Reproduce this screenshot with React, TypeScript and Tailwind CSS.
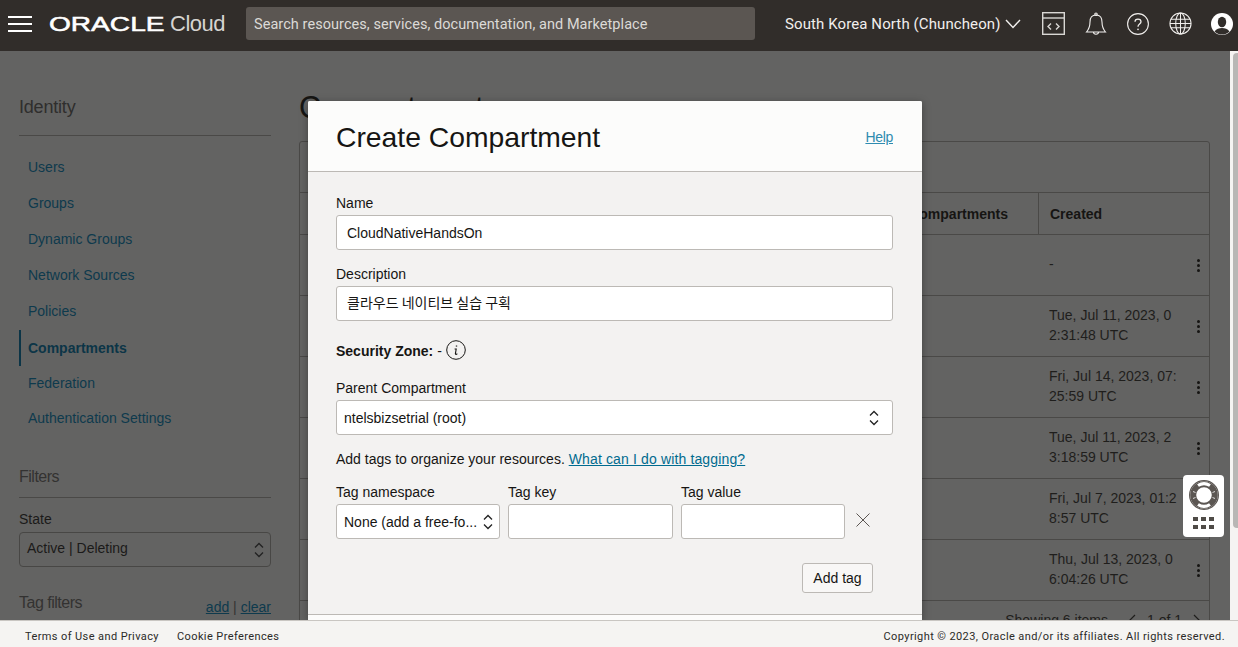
import React from 'react';

const sans = "font-['Liberation_Sans',Arial,sans-serif]";

const navItems = [
  { label: 'Users', cls: 'h-[36px] pl-[9px]' },
  { label: 'Groups', cls: 'h-[36px] pl-[9px]' },
  { label: 'Dynamic Groups', cls: 'h-[36px] pl-[9px]' },
  { label: 'Network Sources', cls: 'h-[36px] pl-[9px]' },
  { label: 'Policies', cls: 'h-[36px] pl-[9px]' },
  { label: 'Compartments', cls: 'h-[36px] mt-[1px] pl-[7px] border-l-2 border-[#0c3547] font-bold text-[#0c3547]' },
  { label: 'Federation', cls: 'h-[35px] pl-[9px]' },
  { label: 'Authentication Settings', cls: 'h-[35px] pl-[9px]' },
];

const rows = [
  ['-'],
  ['Tue, Jul 11, 2023, 0', '2:31:48 UTC'],
  ['Fri, Jul 14, 2023, 07:', '25:59 UTC'],
  ['Tue, Jul 11, 2023, 2', '3:18:59 UTC'],
  ['Fri, Jul 7, 2023, 01:2', '8:57 UTC'],
  ['Thu, Jul 13, 2023, 0', '6:04:26 UTC'],
];

const Updown = ({ color = '#222' }: { color?: string }) => (
  <svg width="10" height="16" viewBox="0 0 10 16" fill="none" stroke={color} strokeWidth="1.3">
    <path d="M1 5.5 L5 1.5 L9 5.5" />
    <path d="M1 10.5 L5 14.5 L9 10.5" />
  </svg>
);

const Dots = () => (
  <div className="flex flex-col gap-[2px]">
    <span className="w-[3px] h-[3px] rounded-full bg-[#161513]" />
    <span className="w-[3px] h-[3px] rounded-full bg-[#161513]" />
    <span className="w-[3px] h-[3px] rounded-full bg-[#161513]" />
  </div>
);

const Header = () => (
  <header className="h-[51px] shrink-0 bg-[#312d2a] flex items-center pb-[4px] text-white">
    <svg className="ml-[8px]" width="24" height="16" viewBox="0 0 24 16" stroke="#fff" strokeWidth="2">
      <path d="M0 1 H24 M0 8 H24 M0 15 H24" />
    </svg>
    <div className="ml-[17px] w-[180px] flex items-center">
      <span className="font-['Liberation_Sans',sans-serif] [-webkit-text-stroke:0.5px_white] text-[19.5px] leading-none w-[116px] mt-[2px] inline-block origin-left scale-x-[1.44]">ORACLE</span>
      <span className="font-['Liberation_Sans',sans-serif] font-light text-[#d6d4d1] text-[22px] leading-none ml-[5px] tracking-[-0.5px]">Cloud</span>
    </div>
    <div className="ml-[17px] w-[509px] h-[33px] bg-[#5b5652] rounded-[3px] flex items-center pl-[8px] pt-[2px] font-['Roboto',sans-serif] text-[14.5px] text-[#dcdad7] tracking-[0.06px]">
      Search resources, services, documentation, and Marketplace
    </div>
    <span className="ml-[30px] mt-[2px] font-['Roboto',sans-serif] text-[15px] text-[#f1efed] w-[217px] whitespace-nowrap tracking-[0.1px]">South Korea North (Chuncheon)</span>
    <svg className="ml-[3px]" width="16" height="10" viewBox="0 0 16 10" fill="none" stroke="#f1efed" strokeWidth="1.4">
      <path d="M1 1 L8 8.5 L15 1" />
    </svg>
    <svg className="ml-[21px]" width="23" height="23" viewBox="0 0 23 23" fill="none" stroke="#d9d7d4" strokeWidth="1.4">
      <rect x="0.7" y="0.7" width="21.6" height="21.6" />
      <path d="M1 6 H22" />
      <path d="M9 11.5 L6 14.5 L9 17.5 M14 11.5 L17 14.5 L14 17.5" />
    </svg>
    <svg className="ml-[20px]" width="22" height="24" viewBox="0 0 22 24" fill="none" stroke="#f1efed" strokeWidth="1.1">
      <path d="M11 3 C6.5 3 5 6.5 5 10 C5 14 4 17 1.5 20 H20.5 C18 17 17 14 17 10 C17 6.5 15.5 3 11 3 Z" />
      <circle cx="11" cy="2.2" r="1.2" />
      <path d="M8.5 20 C8.5 23 13.5 23 13.5 20" />
    </svg>
    <svg className="ml-[20px]" width="22" height="22" viewBox="0 0 22 22" fill="none" stroke="#f1efed" strokeWidth="1.1">
      <circle cx="11" cy="11" r="10.4" />
      <path d="M8 8.8 C8 5.2 14 5.2 14 8.8 C14 11.2 11 11 11 13.8" strokeWidth="1.3" />
      <circle cx="11" cy="16.4" r="0.8" fill="#f1efed" stroke="none" />
    </svg>
    <svg className="ml-[20px]" width="23" height="23" viewBox="0 0 24 24" fill="none" stroke="#f1efed" strokeWidth="1.1">
      <circle cx="12" cy="12" r="11" />
      <ellipse cx="12" cy="12" rx="5" ry="11" />
      <path d="M12 1 V23 M2 7.5 H22 M2 16.5 H22 M1 12 H23" />
    </svg>
    <svg className="ml-[19px]" width="22" height="22" viewBox="0 0 22 22">
      <circle cx="11" cy="11" r="11" fill="#fff" />
      <ellipse cx="11" cy="9" rx="4.2" ry="5.2" fill="#312d2a" />
      <path d="M3.5 18.5 C5.5 15.5 8 15 11 15 C14 15 16.5 15.5 18.5 18.5 C16 21 13 21.6 11 21.6 C9 21.6 6 21 3.5 18.5 Z" fill="#312d2a" />
    </svg>
  </header>
);

const Sidebar = () => (
  <aside className="w-[252px] ml-[19px] shrink-0 pt-[44px]">
    <div className="text-[18px] leading-[24px] font-light text-[#2f2e2d] tracking-[-0.2px] h-[41px] border-b border-[#4a4947]">Identity</div>
    <nav className="mt-[13px] text-[14px] text-[#0e3a4d]">
      {navItems.map((item) => (
        <div key={item.label} className={`flex items-center ${item.cls}`}>
          {item.label}
        </div>
      ))}
    </nav>
    <div className="mt-[30px] text-[16px] leading-[22px] text-[#333231] tracking-[-0.5px] h-[32px] border-b border-[#4a4947]">Filters</div>
    <div className="mt-[13px] text-[14px] leading-[16px] text-[#1b1a19]">State</div>
    <div className="mt-[5px] h-[35px] border border-[#484745] rounded-[4px] flex items-center justify-between pl-[7px] pr-[6px] text-[14px] text-[#1b1a19]">
      <span className="-mt-[3px]">Active | Deleting</span>
      <Updown />
    </div>
    <div className="mt-[25px] flex items-start justify-between">
      <span className="text-[16px] leading-[22px] tracking-[-0.5px] text-[#333231]">Tag filters</span>
      <span className="text-[14px] mt-[5px] text-[#333231]">
        <span className="underline text-[#0e3a4d]">add</span> | <span className="underline text-[#0e3a4d]">clear</span>
      </span>
    </div>
  </aside>
);

const Main = () => (
  <main className="flex-1 min-w-0 ml-[28px] pr-[20px] pt-[38px] overflow-hidden">
    <h1 className="text-[30.5px] leading-[36px] h-[52px] text-[#161513] whitespace-nowrap">Compartments</h1>
    <div className="border border-[#4a4947] rounded-t-[3px] h-[500px]">
      <div className="h-[51px] border-b border-[#4a4947]" />
      <div className="h-[42px] flex border-b border-[#4a4947] pt-[2px] text-[14px] font-bold text-[#161513]">
        <div className="w-[738px] flex items-center justify-end pr-[30px]">Child Compartments</div>
        <div className="flex-1 flex items-center pl-[11px] border-l border-[#4a4947] -mt-[2px] pt-[2px]">Created</div>
      </div>
      {rows.map((r, i) => (
        <div key={i} className="h-[61px] flex items-center border-b border-[#4a4947] text-[14px] leading-[20px] text-[#1f1e1c]">
          <div className="w-[749px] shrink-0" />
          <div className="w-[132px] whitespace-nowrap pb-[2px]">
            {r.map((line) => (
              <div key={line}>{line}</div>
            ))}
          </div>
          <div className="ml-[16px]">
            {i !== 4 && <Dots />}
          </div>
        </div>
      ))}
      <div className="flex justify-end items-center h-[38px] pr-[9px] text-[14px] text-[#1f1e1c] whitespace-nowrap">
        <span>Showing 6 items</span>
        <svg className="ml-[21px]" width="7" height="12" viewBox="0 0 7 12" fill="none" stroke="#1f1e1c" strokeWidth="1.2">
          <path d="M6 1 L1 6 L6 11" />
        </svg>
        <span className="ml-[11px]">1 of 1</span>
        <svg className="ml-[11px]" width="7" height="12" viewBox="0 0 7 12" fill="none" stroke="#1f1e1c" strokeWidth="1.2">
          <path d="M1 1 L6 6 L1 11" />
        </svg>
      </div>
    </div>
  </main>
);

const inputCls = 'bg-white border border-[#bcb9b5] rounded-[3px] h-[35px] flex items-center text-[14px] text-[#161513]';

const Dialog = () => (
  <div className="absolute left-[308px] top-[101px] w-[614px] h-[519px] bg-[#f3f2f1] shadow-[0_2px_8px_rgba(0,0,0,0.35)] overflow-hidden rounded-t-[2px]">
    <div className="h-[71px] bg-[#fcfcfb] border-b border-[#bcb9b5] flex items-center justify-between pl-[28px] pr-[29px] pt-[2px]">
      <h2 className="text-[28.3px] leading-[36px] text-[#161513]">Create Compartment</h2>
      <a className="text-[14px] underline text-[#2e8bb0] font-light tracking-[-0.3px]">Help</a>
    </div>
    <div className="pl-[28px] pr-[29px] pt-[22px] text-[14px] text-[#161513]">
      <div className="leading-[18px]">Name</div>
      <div className={`${inputCls} mt-[3px] pl-[10px] pt-[2px]`}>CloudNativeHandsOn</div>
      <div className="leading-[18px] mt-[15px]">Description</div>
      <div className={`${inputCls} mt-[3px] pl-[10px] pb-[2px] text-[13.2px] font-['Noto_Sans_CJK_KR',sans-serif]`}>클라우드 네이티브 실습 구획</div>
      <div className="mt-[18px] flex items-center h-[24px]">
        <b>Security Zone:</b>
        <span className="ml-[4px]">-</span>
        <svg className="ml-[4px] -mt-[2px]" width="20" height="20" viewBox="0 0 20 20" fill="none" stroke="#161513">
          <circle cx="10" cy="10" r="9.3" />
          <path d="M10.5 5.5 V6.6" strokeWidth="1.4" />
          <path d="M8.6 9 H10.2 L9.4 13.6 C9.3 14.6 10.4 14.6 11.3 13.6" strokeWidth="1.1" />
        </svg>
      </div>
      <div className="leading-[18px] mt-[16px]">Parent Compartment</div>
      <div className={`${inputCls} mt-[3px] pl-[7px] pr-[13px] justify-between`}>
        <span className="mt-[2px]">ntelsbizsetrial (root)</span>
        <Updown />
      </div>
      <div className="mt-[14px] leading-[20px]">
        Add tags to organize your resources. <a className="underline text-[#006b8f] tracking-[0.14px]">What can I do with tagging?</a>
      </div>
      <div className="mt-[14px] flex">
        <div className="w-[164px]">
          <div className="leading-[18px]">Tag namespace</div>
          <div className={`${inputCls} mt-[3px] pl-[7px] pr-[6px] justify-between`}>
            <span className="whitespace-nowrap mt-[2px]">None (add a free-fo...</span>
            <Updown />
          </div>
        </div>
        <div className="w-[165px] ml-[8px]">
          <div className="leading-[18px]">Tag key</div>
          <div className={`${inputCls} mt-[3px]`} />
        </div>
        <div className="w-[164px] ml-[8px]">
          <div className="leading-[18px]">Tag value</div>
          <div className={`${inputCls} mt-[3px]`} />
        </div>
        <svg className="ml-[11px] mt-[30px]" width="14" height="14" viewBox="0 0 14 14" stroke="#5b5652" strokeWidth="1">
          <path d="M0.5 0.5 L13.5 13.5 M13.5 0.5 L0.5 13.5" />
        </svg>
      </div>
      <div className="mt-[24px] flex justify-end pr-[20px]">
        <button className="h-[30px] w-[71px] border border-[#bcb9b5] rounded-[3px] bg-[#f8f7f6] text-[14px] text-[#161513]">Add tag</button>
      </div>
    </div>
    <div className="mt-[21px] h-[8px] border-t border-[#bcb9b5] bg-[#fcfcfb]" />
  </div>
);

const HelpWidget = () => (
  <div className="absolute left-[1183px] top-[475px] w-[41px] h-[62px] bg-white rounded-[4px] flex flex-col items-center pt-[5px]">
    <svg width="30" height="30" viewBox="0 0 30 30" fill="none">
      <circle cx="15" cy="15" r="14.4" stroke="#5b5652" strokeWidth="1.2" />
      <circle cx="15" cy="15" r="10.8" stroke="#5b5652" strokeWidth="6" />
      <path d="M9 5.5 A11 11 0 0 1 21 5.5" stroke="#fff" strokeWidth="3.2" />
      <path d="M9 24.5 A11 11 0 0 0 21 24.5" stroke="#fff" strokeWidth="3.2" />
      <path d="M4 11.5 L6.5 12.5 M26 11.5 L23.5 12.5 M4 18.5 L6.5 17.5 M26 18.5 L23.5 17.5" stroke="#fff" strokeWidth="0.8" />
    </svg>
    <div className="mt-[7px] grid grid-cols-3 gap-x-[3px] gap-y-[4px]">
      {[0, 1, 2, 3, 4, 5].map((n) => (
        <span key={n} className="w-[5px] h-[4px] bg-[#4f4b47]" />
      ))}
    </div>
  </div>
);

const Footer = () => (
  <footer className="h-[27px] shrink-0 bg-[#f5f4f2] border-t border-[#c9c6c2] flex items-center justify-between pl-[25px] pr-[13px] pt-[7px] font-['Roboto',sans-serif] text-[11px] tracking-[0.4px] text-[#2b2a28] relative z-10">
    <div className="flex gap-[18px]">
      <span>Terms of Use and Privacy</span>
      <span>Cookie Preferences</span>
    </div>
    <span>Copyright © 2023, Oracle and/or its affiliates. All rights reserved.</span>
  </footer>
);

export default function App() {
  return (
    <div className={`relative w-[1238px] h-[647px] overflow-hidden flex flex-col bg-[#636362] ${sans}`}>
      <Header />
      <div className="flex-1 min-h-0 flex overflow-hidden">
        <Sidebar />
        <Main />
        <div className="w-[8px] shrink-0 bg-[#f5f4f2] pt-[2px]">
          <div className="w-[5px] ml-[3px] h-[475px] bg-[#b8b7b5] rounded-l-[4px]" />
        </div>
      </div>
      <Footer />
      <Dialog />
      <HelpWidget />
    </div>
  );
}
